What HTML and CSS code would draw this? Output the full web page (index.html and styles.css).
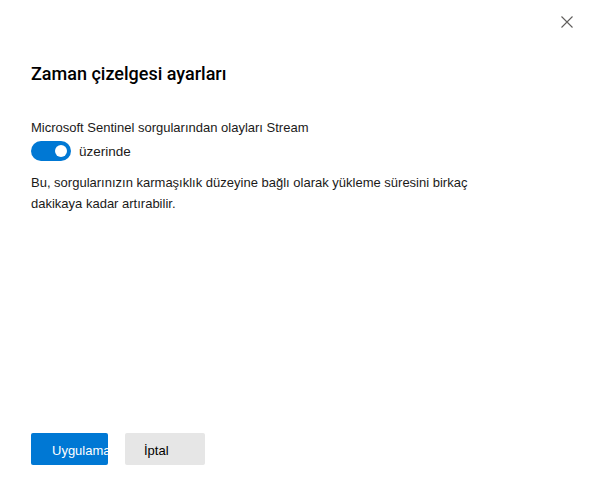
FILE: index.html
```html
<!DOCTYPE html>
<html lang="tr">
<head>
<meta charset="utf-8">
<title>Zaman çizelgesi ayarları</title>
<link rel="stylesheet" href="styles.css">
</head>
<body>
<div class="panel">
  <div class="topbar">
    <button class="close" aria-label="Kapat">
      <svg width="12" height="12" viewBox="0 0 12 12"><path d="M0.5 0.5 L11.5 11.5 M11.5 0.5 L0.5 11.5" stroke="#605e5c" stroke-width="1.1" fill="none"/></svg>
    </button>
  </div>
  <h1 class="title">Zaman çizelgesi ayarları</h1>
  <div class="content">
    <div class="label">Microsoft Sentinel sorgularından olayları Stream</div>
    <div class="toggle-row">
      <span class="toggle"><span class="knob"></span></span>
      <span class="toggle-text">üzerinde</span>
    </div>
    <p class="desc">Bu, sorgularınızın karmaşıklık düzeyine bağlı olarak yükleme süresini birkaç dakikaya kadar artırabilir.</p>
  </div>
  <div class="footer">
    <button class="btn primary"><span>Uygulama</span></button>
    <button class="btn secondary"><span>İptal</span></button>
  </div>
</div>
</body>
</html>
```
FILE: styles.css
```css
html, body {
  margin: 0;
  padding: 0;
  background: #ffffff;
}
body {
  font-family: "Liberation Sans", Arial, sans-serif;
  color: #201f1e;
  font-size: 13px;
}
.panel {
  height: 481px;
  box-sizing: border-box;
  display: flex;
  flex-direction: column;
  padding: 0 0 16px 31px;
}
.topbar {
  display: flex;
  justify-content: flex-end;
  padding-top: 10px;
  padding-right: 11px;
}
.close {
  width: 24px;
  height: 24px;
  border: none;
  background: transparent;
  padding: 0;
  display: flex;
  align-items: center;
  justify-content: center;
}
.title {
  margin: 28px 0 0 0;
  font-family: Roboto, "Liberation Sans", sans-serif;
  font-size: 18px;
  line-height: 24px;
  font-weight: 500;
  color: #000000;
}
.content {
  margin-top: 32px;
}
.label {
  line-height: 20px;
  color: #1b1a19;
}
.toggle-row {
  display: flex;
  align-items: center;
  margin-top: 3px;
  height: 20px;
}
.toggle {
  width: 40px;
  height: 20px;
  box-sizing: border-box;
  border-radius: 10px;
  background: #0078d4;
  display: flex;
  align-items: center;
  justify-content: flex-end;
  padding-right: 4px;
}
.knob {
  width: 12px;
  height: 12px;
  border-radius: 50%;
  background: #ffffff;
}
.toggle-text {
  margin-left: 8px;
  font-size: 13.5px;
  line-height: 20px;
  padding-top: 2px;
  color: #1b1a19;
}
.desc {
  margin: 11px 0 0 0;
  max-width: 470px;
  line-height: 21px;
  color: #1b1a19;
}
.footer {
  margin-top: auto;
  display: flex;
  gap: 17px;
}
.btn {
  height: 32px;
  border: none;
  border-radius: 2px;
  font-family: inherit;
  font-size: 13px;
  text-align: left;
  white-space: nowrap;
  overflow: hidden;
  box-sizing: border-box;
  padding: 2px 0 0 20px;
}
.primary {
  width: 77px;
  background: #0078d4;
  color: #ffffff;
  padding-left: 21px;
}
.secondary {
  width: 80px;
  background: #e6e6e6;
  color: #000000;
  padding-left: 19px;
}
```
